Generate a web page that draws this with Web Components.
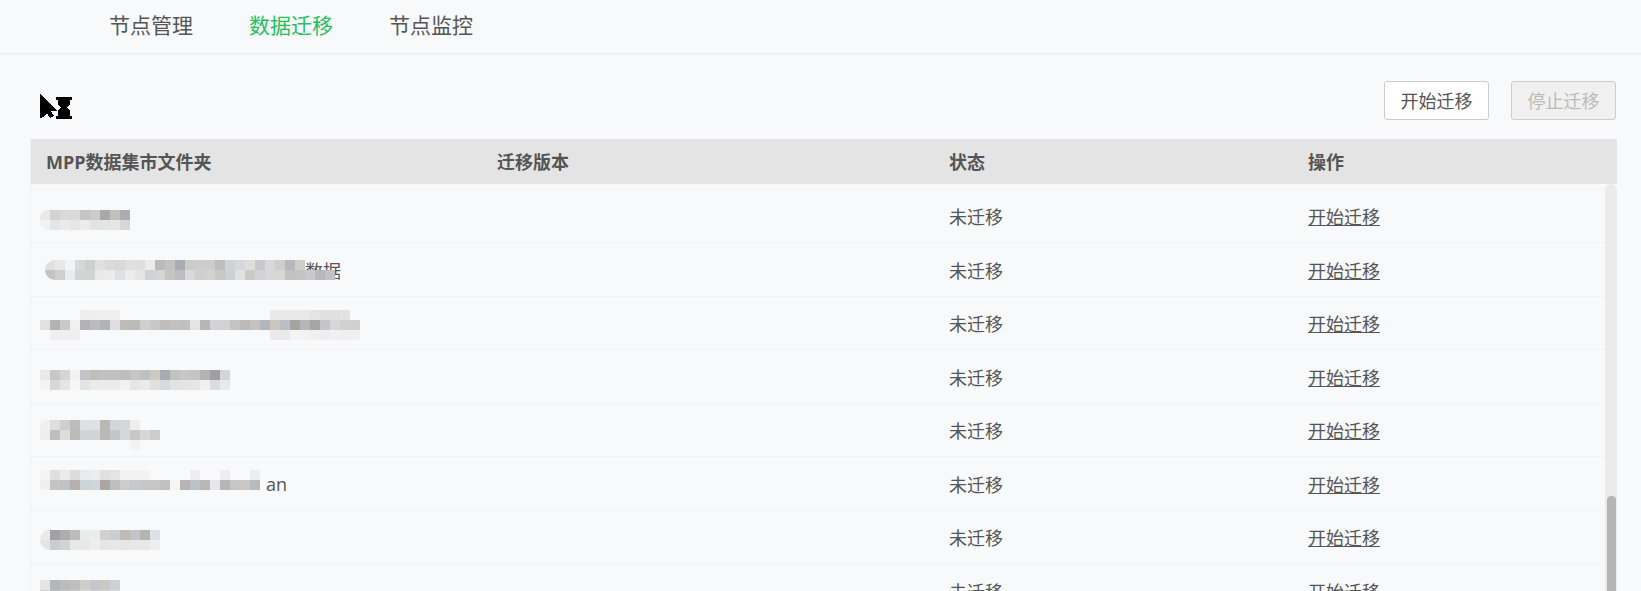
<!DOCTYPE html>
<html lang="zh">
<head>
<meta charset="utf-8">
<title>数据迁移</title>
<style>
  html, body { margin: 0; height: 591px; overflow: hidden; background: #f8f9fb; }
  body {
    display: flex;
    flex-direction: column;
    font-family: "Open Sans", "Noto Sans CJK SC", sans-serif;
    color: #555;
  }
</style>
</head>
<body>
<app-tabs>
  <tab-item>节点管理</tab-item>
  <tab-item active>数据迁移</tab-item>
  <tab-item>节点监控</tab-item>
</app-tabs>
<migrate-toolbar>
  <busy-cursor slot="start"></busy-cursor>
  <ui-button>开始迁移</ui-button>
  <ui-button disabled>停止迁移</ui-button>
</migrate-toolbar>
<data-table>
  <table-row head>
    <span>MPP数据集市文件夹</span>
    <span slot="version">迁移版本</span>
    <span slot="status">状态</span>
    <span slot="action">操作</span>
  </table-row>

  <table-row>
    <mosaic-patch x="9" y="20.100" round="8" cells="e8e8e8 d2d3d5 dcdad8 d8dadc c4c5c5 cccdcb a9a9a9 c0c0bd abacae|f2f2f2 e4e5e6 ebeae8 e4e6e7 ecedeb e2e3e3 e3e4e4 e6e6e4 d6d7d7"></mosaic-patch>
    <span slot="status">未迁移</span><a slot="action">开始迁移</a>
  </table-row>
  <table-row>
    <span style="margin-left:259px">数据</span>
    <mosaic-patch x="14" y="16.600" round="10" cells="e0e0e0 e8e8e8 f0f4f5 d7d9d8 cfcfcf e0e0e0 dadada d9d9d9 e0e0e0 dfdfe1 ececec b9bab9 c3c2be a9acb3 cbcbcb cdcdcd cdcdcc bcbdbc d0d2d5 d7d8d9 dedfdb c8c9cf d9d9d9 d0cecb b8b8ba d0cdca|c4c4c6 cfcfd0 eaebec d2d4d3 d2d3d5 e9e9ea ebebeb dee0e1 ebebeb e6e5e3 cfd2d6 d4d6d5 c6c5c1 bcbdc2 d9d9d9 cfcfcf d2d2d1 c8c8c7 ced0d3 e0e2e1 cbcac6 d2d3d7 d8d8d8 d7d7d6 c2c2c3 c3c3c4 c9c9cb b9b9bb c2c2c4"></mosaic-patch>
    <span slot="status">未迁移</span><a slot="action">开始迁移</a>
  </table-row>
  <table-row>
    <mosaic-patch x="9" y="13.100" cells="- - - - ededed eeeeee efefef efefef - - - - - - - - - - - - - - - e9e9e9 e9e9e9 e9e9e9 e9e9e9 e4e4e4 e0e0e0 e0e0e0 e2e2e2 -|e1e1e1 b3b3b3 c9c9c8 f0f0f0 b3b3b5 bcbcbe b2b3b4 dfdfe1 bebbb8 bcbbba cfcfce c6c8ca c0bcb9 c2c2c3 bfc0c2 e5e4e2 b4b6b8 d2d3d4 d3d3d1 c2c3c5 bcbab8 c5c2bf b3b6bd c9c6c1 bcbfc2 a6a39e b4b6ba a6a5a3 c3c5c8 d7d8d8 d0d1d0 cfd0cf|- efefef efefef efefef - - - - - - - - - - - - - - - - - - - e9eae9 e9eae9 f3f4f4 f2f2f3 f0f0ef eeeeee f1f1f1 efefef eff0f0"></mosaic-patch>
    <span slot="status">未迁移</span><a slot="action">开始迁移</a>
  </table-row>
  <table-row>
    <mosaic-patch x="9" y="19.600" cells="e9e9e9 c8c8c9 d5d5d5 f2f2f2 c3c4c7 bebebc c2c1bd c0c0c1 bfbdb9 c6c6c5 bfc0c4 cdcac4 a8abb1 c1c2c3 c6c7c7 c5c4c0 b3b4b1 9e9ea3 d3d5d8|f3f3f3 d8d8d8 e5e5e5 f6f6f6 e3e4e5 ebebec ebebeb ebebec f2f2f2 e6e6e6 eaeaea e0e0dd d6d9dd e3e3e4 e4e4e4 e6e6e6 f0f0f0 dcdcdf e8e9ea"></mosaic-patch>
    <span slot="status">未迁移</span><a slot="action">开始迁移</a>
  </table-row>
  <table-row>
    <mosaic-patch x="9" y="16.100" round="6" cells="f1f0ef dcdee0 cfcfce bdbcba dde1e4 dfe1e2 bbb8b4 d4d5d7 d5d6d6 eeeeee - -|f0eeec bfbdbe dbdedd bdbbb8 d0d4d7 d1d3d5 bcb8b5 c3c5c8 d6d7d8 c9c6c3 d6d7d9 cbcccb|- - - - - - - - - f2f2f2 - -"></mosaic-patch>
    <span slot="status">未迁移</span><a slot="action">开始迁移</a>
  </table-row>
  <table-row>
    <span style="margin-left:220px">an</span>
    <mosaic-patch x="9" y="12.600" round="4" cells="f4f4f4 e0e0e0 ebebeb dcdcdc e8ebed ebeced e0e0dc e4e4e6 f2f2f2 f2f2f2 f2f2f2 - - - - eeeef0 - - eeeef0 - - ecedf0|f0efee c6c3c1 bfc3c8 b5b0ac cdd4d8 cfd5d9 aca7a3 bdbfc0 cccccb c5c8cc c5c6c8 c6c6c6 bfc0c0 f6f5f1 b8b3b7 bbc1c7 b9b7b3 e5e8eb b9b5b7 c6c6c4 c9c8c7 b7bbc0"></mosaic-patch>
    <span slot="status">未迁移</span><a slot="action">开始迁移</a>
  </table-row>
  <table-row>
    <mosaic-patch x="9" y="19.100" round="10" cells="e9e9e9 a0a0a6 adadad bdbcb8 eaebec ebebeb d2d1cc cccdd2 bebab4 c4c3c9 b4b5b1 dde0e5|e3e3e3 cdcccd d2d3d4 e8e8e8 e8e8e8 eeeeee e6e6e6 e8e8e9 e6e6e4 e8e8ea e8e8e6 edeef0"></mosaic-patch>
    <span slot="status">未迁移</span><a slot="action">开始迁移</a>
  </table-row>
  <table-row>
    <mosaic-patch x="9" y="15.600" cells="e4e4e2 b4b6bc bcbcbc c0c1bf d0cecd c5c7cc ccc9c5 cdd0d5|d0d0d0 c0c0c4 c8c8c8 ccccca dcdcdc d0d2d6 d8d6d2 d8dade"></mosaic-patch>
    <span slot="status">未迁移</span><a slot="action">开始迁移</a>
  </table-row>
</data-table>

<script>
class AppTabs extends HTMLElement {
  constructor() {
    super();
    this.attachShadow({ mode: 'open' }).innerHTML = `
      <style>
        :host {
          display: flex;
          flex: none;
          gap: 56px;
          height: 54px;
          padding-left: 109px;
          box-sizing: border-box;
          border-bottom: 1px solid #e9eaec;
          box-shadow: 0 1px 1px #f2f3f5;
        }
      </style>
      <slot></slot>`;
  }
}

class TabItem extends HTMLElement {
  constructor() {
    super();
    this.attachShadow({ mode: 'open' }).innerHTML = `
      <style>
        :host { display: block; font-size: 21px; line-height: 51px; color: #555; cursor: pointer; }
        :host([active]) { color: #1fc15d; }
      </style>
      <slot></slot>`;
  }
}

class MigrateToolbar extends HTMLElement {
  constructor() {
    super();
    this.attachShadow({ mode: 'open' }).innerHTML = `
      <style>
        :host {
          display: flex;
          flex: none;
          align-items: flex-end;
          gap: 22px;
          padding: 27px 25px 19px 40px;
        }
        .start { margin-right: auto; display: flex; margin-bottom: 1px; }
      </style>
      <div class="start"><slot name="start"></slot></div>
      <slot></slot>`;
  }
}

class UiButton extends HTMLElement {
  constructor() {
    super();
    this.attachShadow({ mode: 'open' }).innerHTML = `
      <style>
        :host {
          display: block;
          box-sizing: border-box;
          width: 105px;
          height: 39px;
          border: 1px solid #ccc;
          border-radius: 3px;
          background: #fff;
          color: #555;
          font-size: 18px;
          line-height: 38px;
          text-align: center;
        }
        :host([disabled]) { background: #f0f0f0; color: #bbb; }
      </style>
      <slot></slot>`;
  }
}

class BusyCursor extends HTMLElement {
  constructor() {
    super();
    // arrow and hourglass, the way the system draws its "working" pointer
    this.attachShadow({ mode: 'open' }).innerHTML = `
      <style>:host { display: block; width: 33px; height: 25px; line-height: 0; }</style>
      <svg width="33" height="25" viewBox="0 0 33 25" shape-rendering="crispEdges">
        <path fill="#000" d="M0 0L17 17L11 17L14 22L10 24L7 19L3 23L0 24Z"/>
        <path fill="#000" d="M16 3H32V6H30V10L27 13.500L30 17V22H32V25H16V22H18V17L21 13.500L18 10V6H16Z"/>
      </svg>`;
  }
}

class DataTable extends HTMLElement {
  constructor() {
    super();
    this.attachShadow({ mode: 'open' }).innerHTML = `
      <style>
        :host {
          display: flex;
          flex-direction: column;
          flex: 1;
          min-height: 0;
          margin: 0 24px 0 30px;
          border-left: 1px solid #f0f1f3;
        }
        .body { flex: 1; min-height: 0; display: flex; overflow: hidden; }
        .rows { flex: 1; min-width: 0; padding-top: 4.900px; }
        .track {
          flex: none;
          width: 12px;
          height: 500px;
          padding: 312px 2px 0;
          box-sizing: border-box;
          background: #ebebeb;
          border-radius: 6px 6px 0 0;
        }
        .thumb { width: 8.500px; height: 300px; background: #b5b5b5; border-radius: 4px; }
      </style>
      <slot name="head"></slot>
      <div class="body">
        <div class="rows"><slot></slot></div>
        <div class="track"><div class="thumb"></div></div>
      </div>`;
  }
  connectedCallback() {
    const head = this.querySelector('table-row[head]');
    if (head) head.slot = 'head';
  }
}

class TableRow extends HTMLElement {
  constructor() {
    super();
    this.attachShadow({ mode: 'open' }).innerHTML = `
      <style>
        :host {
          display: grid;
          grid-template-columns: 451px 452px 358px 1fr;
          box-sizing: border-box;
          height: 53.500px;
          border-top: 1px solid #f1f2f4;
          font-size: 18px;
          align-items: center;
          position: relative;
          color: #555;
        }
        :host([head]) {
          height: 45px;
          padding-bottom: 2px;
          border-top: 0;
          background: #e4e4e4;
          font-weight: 700;
        }
        .c { padding-left: 15px; white-space: nowrap; }
        .c:last-child { padding-left: 16px; }
        ::slotted(a) { text-decoration: underline; color: #555; }
      </style>
      <div class="c"><slot></slot></div>
      <div class="c"><slot name="version"></slot></div>
      <div class="c"><slot name="status"></slot></div>
      <div class="c"><slot name="action"></slot></div>`;
  }
}

// pixelated blur laid over a file name; cells are 10px, strips split by |
class MosaicPatch extends HTMLElement {
  connectedCallback() {
    const strips = this.getAttribute('cells').trim().split('|').map((s) => s.trim().split(/\s+/));
    const cols = Math.max(...strips.map((s) => s.length));
    const x = this.getAttribute('x') || 0;
    const y = this.getAttribute('y') || 0;
    const round = this.getAttribute('round') || 0;
    const cells = strips.map((strip) => {
      const filled = strip.concat(Array(cols - strip.length).fill('-'));
      return filled.map((c) => `<i style="background:${c === '-' ? 'transparent' : '#' + c}"></i>`).join('');
    }).join('');
    this.attachShadow({ mode: 'open' }).innerHTML = `
      <style>
        :host { position: absolute; left: ${x}px; top: ${y}px; display: block; }
        .g { display: grid; grid-template-columns: repeat(${cols}, 10px); grid-auto-rows: 10px;
             border-radius: ${round}px 0 0 ${round}px; overflow: hidden; }
      </style>
      <div class="g">${cells}</div>`;
  }
}

customElements.define('app-tabs', AppTabs);
customElements.define('tab-item', TabItem);
customElements.define('migrate-toolbar', MigrateToolbar);
customElements.define('ui-button', UiButton);
customElements.define('busy-cursor', BusyCursor);
customElements.define('data-table', DataTable);
customElements.define('table-row', TableRow);
customElements.define('mosaic-patch', MosaicPatch);
</script>
</body>
</html>
